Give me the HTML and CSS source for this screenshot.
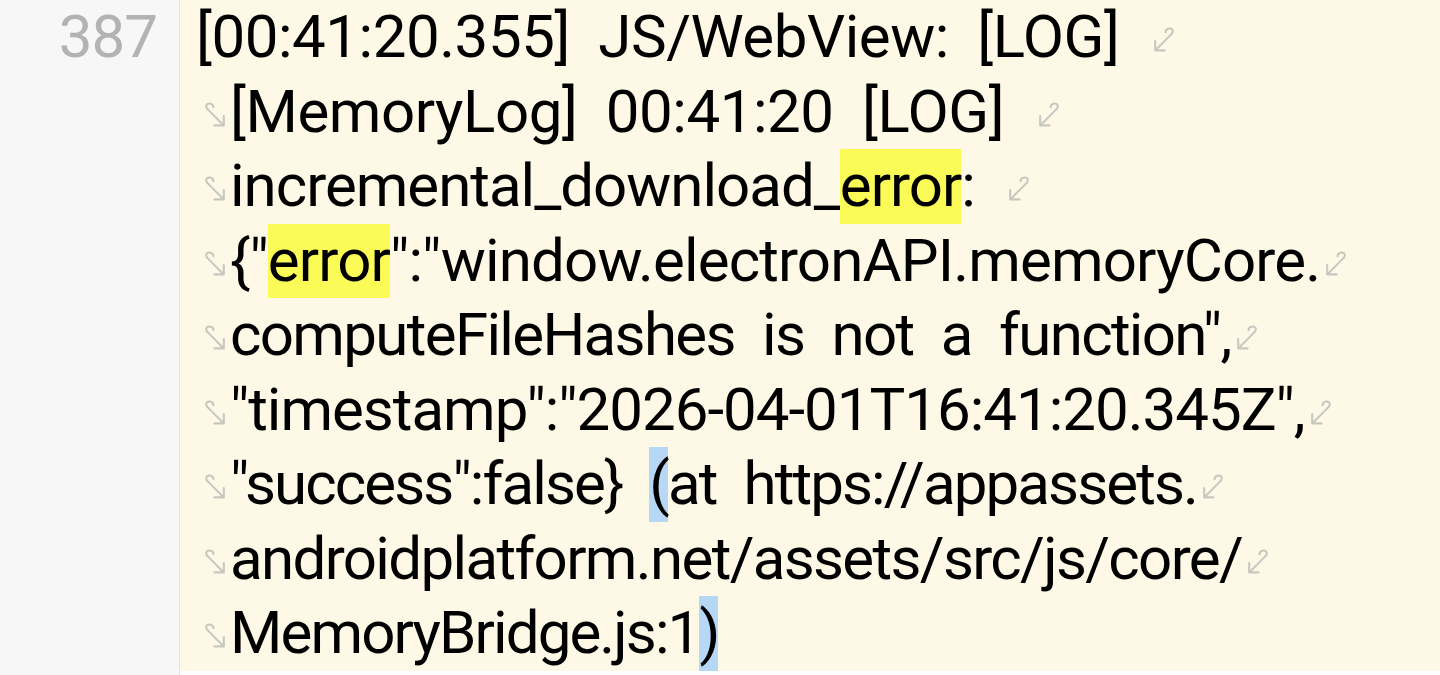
FILE: index.html
```html
<!DOCTYPE html>
<html lang="en">
<head>
<meta charset="utf-8">
<title>Log viewer</title>
<link rel="stylesheet" href="styles.css">
</head>
<body>
<div class="editor">
  <div class="gutter"><div class="ln">387</div></div>
  <div class="code">
    <div class="row loose">[00:41:20.355] JS/WebView: [LOG] <svg class="we" viewBox="0 0 24 26"><path d="M14 6 C14 2 21 1 21 5 C21 7 19.5 8 18 9.5 L4 23.5 M4 14.5 V23.5 H13"/></svg></div>
    <div class="row loose"><svg class="ws" viewBox="0 0 24 26"><path d="M10 6 C10 2 3 1 3 5 C3 7 4.5 8 6 9.5 L20 23.5 M20 14.5 V23.5 H11"/></svg>[MemoryLog] 00:41:20 [LOG] <svg class="we" viewBox="0 0 24 26"><path d="M14 6 C14 2 21 1 21 5 C21 7 19.5 8 18 9.5 L4 23.5 M4 14.5 V23.5 H13"/></svg></div>
    <div class="row"><svg class="ws" viewBox="0 0 24 26"><path d="M10 6 C10 2 3 1 3 5 C3 7 4.5 8 6 9.5 L20 23.5 M20 14.5 V23.5 H11"/></svg>incremental_download_<span class="hl">error</span>: <svg class="we" viewBox="0 0 24 26"><path d="M14 6 C14 2 21 1 21 5 C21 7 19.5 8 18 9.5 L4 23.5 M4 14.5 V23.5 H13"/></svg></div>
    <div class="row mid"><svg class="ws" viewBox="0 0 24 26"><path d="M10 6 C10 2 3 1 3 5 C3 7 4.5 8 6 9.5 L20 23.5 M20 14.5 V23.5 H11"/></svg>{"<span class="hl">error</span>":"window.electronAPI.memoryCore.<svg class="we" viewBox="0 0 24 26"><path d="M14 6 C14 2 21 1 21 5 C21 7 19.5 8 18 9.5 L4 23.5 M4 14.5 V23.5 H13"/></svg></div>
    <div class="row tight"><svg class="ws" viewBox="0 0 24 26"><path d="M10 6 C10 2 3 1 3 5 C3 7 4.5 8 6 9.5 L20 23.5 M20 14.5 V23.5 H11"/></svg>computeFileHashes is not a function",<svg class="we" viewBox="0 0 24 26"><path d="M14 6 C14 2 21 1 21 5 C21 7 19.5 8 18 9.5 L4 23.5 M4 14.5 V23.5 H13"/></svg></div>
    <div class="row"><svg class="ws" viewBox="0 0 24 26"><path d="M10 6 C10 2 3 1 3 5 C3 7 4.5 8 6 9.5 L20 23.5 M20 14.5 V23.5 H11"/></svg>"timestamp":"2026-04-01T16:41:20.345Z",<svg class="we" viewBox="0 0 24 26"><path d="M14 6 C14 2 21 1 21 5 C21 7 19.5 8 18 9.5 L4 23.5 M4 14.5 V23.5 H13"/></svg></div>
    <div class="row tighter"><svg class="ws" viewBox="0 0 24 26"><path d="M10 6 C10 2 3 1 3 5 C3 7 4.5 8 6 9.5 L20 23.5 M20 14.5 V23.5 H11"/></svg>"success":false} <span class="cur">(</span>at https://appassets.<svg class="we" viewBox="0 0 24 26"><path d="M14 6 C14 2 21 1 21 5 C21 7 19.5 8 18 9.5 L4 23.5 M4 14.5 V23.5 H13"/></svg></div>
    <div class="row tight"><svg class="ws" viewBox="0 0 24 26"><path d="M10 6 C10 2 3 1 3 5 C3 7 4.5 8 6 9.5 L20 23.5 M20 14.5 V23.5 H11"/></svg>androidplatform.net/assets/src/js/core/<svg class="we" viewBox="0 0 24 26"><path d="M14 6 C14 2 21 1 21 5 C21 7 19.5 8 18 9.5 L4 23.5 M4 14.5 V23.5 H13"/></svg></div>
    <div class="row tighter"><svg class="ws" viewBox="0 0 24 26"><path d="M10 6 C10 2 3 1 3 5 C3 7 4.5 8 6 9.5 L20 23.5 M20 14.5 V23.5 H11"/></svg>MemoryBridge.js:1<span class="cur">)</span></div>
  </div>
</div>
</body>
</html>
```

FILE: styles.css
```css
html, body {
  margin: 0;
  padding: 0;
  background: #ffffff;
  height: 100%;
  overflow: hidden;
}

body {
  font-family: Roboto, "Noto Sans", sans-serif;
}

.editor {
  display: flex;
  align-items: flex-start;
  height: 100vh;
}

.gutter {
  align-self: stretch;
  width: 179px;
  flex: 0 0 179px;
  background: #f7f7f7;
  border-right: 1px solid #e4e4e4;
}

.ln {
  text-align: right;
  padding-right: 22px;
  font-size: 60px;
  line-height: 74.5px;
  color: #b3b3b3;
  letter-spacing: -1px;
}

.code {
  flex: 1;
  background: #fef9e7;
  padding-left: 16px;
}

.row {
  white-space: pre;
  font-size: 60px;
  line-height: 74.5px;
  height: 74.5px;
  color: #000000;
  letter-spacing: -1px;
  word-spacing: 14px;
}

.row.loose {
  letter-spacing: -0.45px;
}

.row.mid {
  letter-spacing: -0.85px;
}

.row.tight {
  letter-spacing: -1.65px;
}

.row.tighter {
  letter-spacing: -1.88px;
}

.hl {
  display: inline-block;
  background: #fbfb58;
}

.cur {
  display: inline-block;
  background: #b7d8f4;
}

.we, .ws {
  width: 25px;
  height: 27px;
  vertical-align: 4px;
  fill: none;
  stroke: #c8c8c0;
  stroke-width: 2;
  stroke-linecap: round;
  stroke-linejoin: round;
}

.we {
  margin-left: 3px;
}

.ws {
  margin-left: 7px;
  margin-right: 2px;
}
```
